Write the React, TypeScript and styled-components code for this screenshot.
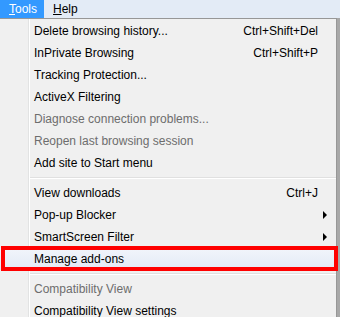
import React from 'react';
import styled, { createGlobalStyle, css } from 'styled-components';

type MenuEntry =
  | { kind: 'item'; label: string; shortcut?: string; disabled?: boolean; submenu?: boolean; marked?: boolean }
  | { kind: 'sep' };

const entries: MenuEntry[] = [
  { kind: 'item', label: 'Delete browsing history...', shortcut: 'Ctrl+Shift+Del' },
  { kind: 'item', label: 'InPrivate Browsing', shortcut: 'Ctrl+Shift+P' },
  { kind: 'item', label: 'Tracking Protection...' },
  { kind: 'item', label: 'ActiveX Filtering' },
  { kind: 'item', label: 'Diagnose connection problems...', disabled: true },
  { kind: 'item', label: 'Reopen last browsing session', disabled: true },
  { kind: 'item', label: 'Add site to Start menu' },
  { kind: 'sep' },
  { kind: 'item', label: 'View downloads', shortcut: 'Ctrl+J' },
  { kind: 'item', label: 'Pop-up Blocker', submenu: true },
  { kind: 'item', label: 'SmartScreen Filter', submenu: true },
  { kind: 'item', label: 'Manage add-ons', marked: true },
  { kind: 'sep' },
  { kind: 'item', label: 'Compatibility View', disabled: true },
  { kind: 'item', label: 'Compatibility View settings' },
];

const GlobalStyle = createGlobalStyle`
  html, body {
    margin: 0;
    padding: 0;
  }
  body {
    width: 340px;
    height: 317px;
    overflow: hidden;
    background: #b4b4b4;
    font-family: "Liberation Sans", Arial, sans-serif;
    font-size: 12px;
  }
`;

const Frame = styled.div`
  display: flex;
  flex-direction: column;
  width: 340px;
  height: 317px;
  overflow: hidden;
`;

const MenuBar = styled.div`
  display: flex;
  height: 18px;
  background: #e3ebf6;
`;

const MenuTitle = styled.div<{ $open?: boolean }>`
  padding: 0 7px 0 9px;
  line-height: 18px;
  color: #000;
  ${p => p.$open && css`
    background: #3399ff;
    color: #fff;
  `}
`;

const Key = styled.span`
  text-decoration: underline;
`;

const Body = styled.div`
  display: flex;
  flex: 1;
`;

const Menu = styled.div`
  width: 336px;
  display: flex;
  flex-direction: column;
  padding-top: 1px;
  border-top: 1px solid #979797;
  border-right: 1px solid #979797;
  background: linear-gradient(to right, #f0f0f0 0, #f0f0f0 28px, #e2e3e3 28px, #e2e3e3 29px, #ffffff 29px, #ffffff 30px, #f0f0f0 30px);
`;

const Backdrop = styled.div`
  flex: 1;
  background: #a8a8a8;
`;

const Row = styled.div<{ $disabled?: boolean; $marked?: boolean }>`
  position: relative;
  display: grid;
  grid-template-columns: 34px 1fr auto 18px;
  align-items: center;
  height: 22px;
  color: ${p => (p.$disabled ? '#6d6d6d' : '#000')};
  ${p => p.$marked && css`
    background: linear-gradient(#f2f5fb, #e2e9f5);
    &::after {
      content: '';
      position: absolute;
      top: -2px;
      bottom: -1px;
      left: 1px;
      right: -2px;
      border: 4px solid #ff0000;
    }
  `}
`;

const Label = styled.span`
  grid-column: 2;
  white-space: nowrap;
`;

const Shortcut = styled.span`
  grid-column: 3;
  white-space: nowrap;
`;

const ArrowCell = styled.span`
  grid-column: 4;
  display: flex;
  padding-left: 5px;
`;

const Arrow = styled.span`
  width: 0;
  height: 0;
  border-left: 4px solid #000;
  border-top: 4px solid transparent;
  border-bottom: 4px solid transparent;
`;

const Separator = styled.div`
  height: 8px;
  margin-left: 30px;
  display: flex;
  flex-direction: column;
  justify-content: center;

  &::before {
    content: '';
    display: block;
    border-top: 1px solid #e0e0e0;
    border-bottom: 1px solid #ffffff;
  }
`;

export default function App() {
  return (
    <Frame>
      <GlobalStyle />
      <MenuBar>
        <MenuTitle $open><Key>T</Key>ools</MenuTitle>
        <MenuTitle><Key>H</Key>elp</MenuTitle>
      </MenuBar>
      <Body>
        <Menu>
          {entries.map((e, i) =>
            e.kind === 'sep' ? (
              <Separator key={i} />
            ) : (
              <Row key={i} $disabled={e.disabled} $marked={e.marked}>
                <Label>{e.label}</Label>
                {e.shortcut && <Shortcut>{e.shortcut}</Shortcut>}
                {e.submenu && (
                  <ArrowCell>
                    <Arrow />
                  </ArrowCell>
                )}
              </Row>
            )
          )}
        </Menu>
        <Backdrop />
      </Body>
    </Frame>
  );
}
